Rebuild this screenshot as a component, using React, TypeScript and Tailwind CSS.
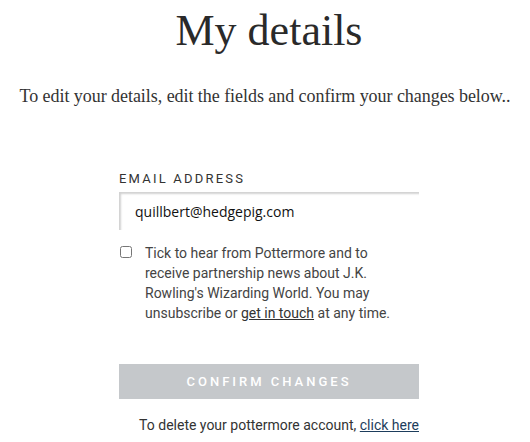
import React from 'react';

export default function App() {
  return (
    <div className="min-h-screen bg-white flex flex-col items-center pl-[8px]">
      <h1 className="font-['Liberation_Serif',serif] text-[44px] leading-none text-[#2a2a2a] mt-[9px]">My details</h1>

      <p className="font-['Liberation_Serif',serif] text-[18px] text-[#333] mt-[30px] -ml-[8px] tracking-[-0.05px]">
        To edit your details, edit the fields and confirm your changes below..
      </p>

      <form className="w-[300px] mt-[62px] flex flex-col font-['Roboto',sans-serif]" onSubmit={(e) => e.preventDefault()}>
        <label className="text-[13px] leading-none tracking-[2.2px] text-[#333] uppercase">Email address</label>
        <input
          type="email"
          defaultValue="quillbert@hedgepig.com"
          className="mt-[7px] h-[38px] w-full bg-white pl-4 text-[14px] text-[#111] font-['Open_Sans',sans-serif] outline-none shadow-[inset_2px_2px_2px_rgba(0,0,0,0.18)]"
        />

        <label className="mt-[13px] flex items-start gap-[13px] text-[14px] leading-5 text-[#444]">
          <input type="checkbox" className="mt-[3px] ml-[1px] w-[12px] h-[12px] shrink-0 accent-[#888]" />
          <span className="w-[252px]">
            Tick to hear from Pottermore and to receive partnership news about J.K. Rowling's Wizarding World. You may
            unsubscribe or <a href="#" className="underline text-[#333]">get in touch</a> at any time.
          </span>
        </label>

        <button
          type="submit"
          className="mt-[41px] h-[35px] w-full bg-[#c5c8cb] text-white text-[13px] font-medium tracking-[3px] uppercase"
        >
          Confirm changes
        </button>

        <p className="mt-[16px] text-right text-[14px] text-[#333]">
          To delete your pottermore account, <a href="#" className="underline text-[#1d3d5c]">click here</a>
        </p>
      </form>
    </div>
  );
}
